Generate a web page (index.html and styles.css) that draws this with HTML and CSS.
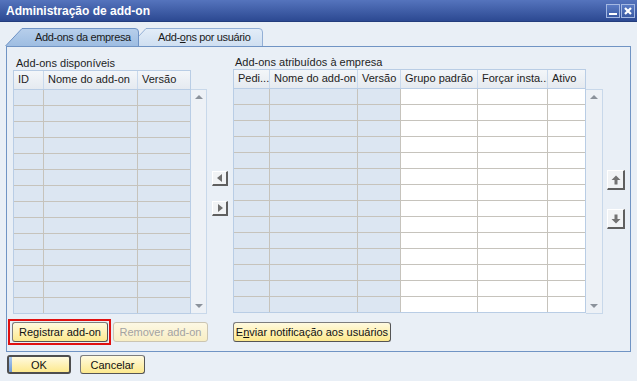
FILE: index.html
```html
<!doctype html>
<html lang="pt">
<head>
    <meta charset="UTF-8">
    <title>Administração de add-on</title>
    <link rel="stylesheet" href="styles.css">
</head>
<body>
    <div class="titlebar">
        <span class="title">Administração de add-on</span>
        <div class="controls">
            <span class="ctl"><svg width="10" height="10" viewBox="0 0 10 10"><rect x="1" y="7" width="8" height="2" fill="#fff"/></svg></span>
            <span class="ctl"><svg width="10" height="10" viewBox="0 0 10 10"><path d="M2 2 L8 8 M8 2 L2 8" stroke="#fff" stroke-width="2.2"/></svg></span>
        </div>
    </div>
    <div class="main">
        <div class="tabs">
            <div class="tab active">
                <svg width="134" height="18" viewBox="0 0 134 18"><defs><linearGradient id="ta" x1="0" y1="0" x2="0" y2="1"><stop offset="0" stop-color="#b7cfeb"/><stop offset="1" stop-color="#9ebde2"/></linearGradient></defs><path d="M0.5 18 L17 0.5 H130 Q133.5 0.5 133.5 4 V18" fill="url(#ta)" stroke="#6f93c5"/></svg>
                <span>Add-ons da empresa</span>
            </div>
            <div class="tab">
                <svg width="134" height="18" viewBox="0 0 134 18"><defs><linearGradient id="tb" x1="0" y1="0" x2="0" y2="1"><stop offset="0" stop-color="#e3edf8"/><stop offset="1" stop-color="#cfdff1"/></linearGradient></defs><path d="M0.5 18 L17 0.5 H130 Q133.5 0.5 133.5 4 V18" fill="url(#tb)" stroke="#93afd5"/></svg>
                <span>Add-<u>o</u>ns por usuário</span>
            </div>
        </div>
        <div class="panel">
            <div class="lists">
                <div class="side side-left">
                    <div class="label">Add-ons disponíveis</div>
                    <div class="gridbox">
                        <div class="grid grid-left" id="gridLeft">
                            <div class="head">
                                <div class="hc">ID</div>
                                <div class="hc">Nome do add-on</div>
                                <div class="hc">Versão</div>
                            </div>
                        </div>
                        <div class="scroll">
                            <span class="sa up"></span>
                            <span class="sa down"></span>
                        </div>
                    </div>
                </div>
                <div class="movers">
                    <span class="mv"><svg width="8" height="10" viewBox="0 0 8 10"><path d="M6 1 V9 L1 5 Z" fill="#6e6e6e"/></svg></span>
                    <span class="mv"><svg width="8" height="10" viewBox="0 0 8 10"><path d="M2 1 V9 L7 5 Z" fill="#6e6e6e"/></svg></span>
                </div>
                <div class="side side-right">
                    <div class="label">Add-ons atribuídos à empresa</div>
                    <div class="gridbox">
                        <div class="grid grid-right" id="gridRight">
                            <div class="head">
                                <div class="hc">Pedi...</div>
                                <div class="hc">Nome do add-on</div>
                                <div class="hc">Versão</div>
                                <div class="hc">Grupo padrão</div>
                                <div class="hc">Forçar insta...</div>
                                <div class="hc">Ativo</div>
                            </div>
                        </div>
                        <div class="scroll">
                            <span class="sa up"></span>
                            <span class="sa down"></span>
                        </div>
                    </div>
                </div>
                <div class="updown">
                    <span class="ud"><svg width="10" height="10" viewBox="0 0 10 10"><path d="M5 0.5 L9.5 5 H6.5 V9.5 H3.5 V5 H0.5 Z" fill="#737373"/></svg></span>
                    <span class="ud"><svg width="10" height="10" viewBox="0 0 10 10"><path d="M5 9.5 L9.5 5 H6.5 V0.5 H3.5 V5 H0.5 Z" fill="#737373"/></svg></span>
                </div>
            </div>
            <div class="actions">
                <div class="focus-box"><button class="btn btn-reg">Registrar add-on</button></div>
                <button class="btn btn-rem" disabled>Remover add-on</button>
                <button class="btn btn-send">E<u>n</u>viar notificação aos usuários</button>
            </div>
        </div>
        <div class="footer">
            <button class="btn btn-ok">OK</button>
            <button class="btn btn-cancel">Cancelar</button>
        </div>
    </div>
    <script type="text/javascript">
        // 14 linhas vazias em cada grade
        function fillGrid(id, cols){
            var grid = document.getElementById(id);
            for(var i = 0;i < 14;i++){
                var row = document.createElement('div');
                row.className = 'row';
                for(var j = 0;j < cols;j++){
                    var cell = document.createElement('div');
                    cell.className = 'c';
                    row.appendChild(cell);
                }
                grid.appendChild(row);
            }
        }
        fillGrid('gridLeft', 3);
        fillGrid('gridRight', 6);
    </script>
</body>
</html>
```

FILE: styles.css
```css
*{
    margin: 0;
    padding: 0;
    box-sizing: border-box;
}
body{
    width: 637px;
    height: 381px;
    overflow: hidden;
    background: #e9eff6;
    font-family: "Liberation Sans", Arial, sans-serif;
    font-size: 11px;
    color: #1e1e1e;
}
.titlebar{
    height: 22px;
    display: flex;
    align-items: center;
    justify-content: space-between;
    padding: 0 2px 0 6px;
    background: linear-gradient(#5574bd, #2c4992);
    border-bottom: 1px solid #233d7d;
}
.title{
    color: #fff;
    font-weight: bold;
    font-size: 12px;
}
.controls{
    display: flex;
    gap: 1px;
}
.ctl{
    width: 14px;
    height: 14px;
    border: 1px solid #a4b8e2;
    background: linear-gradient(#5a7bc4, #3b5ba4);
    display: flex;
    align-items: center;
    justify-content: center;
}
.main{
    padding: 6px 6px 0 6px;
}
.tabs{
    display: flex;
    height: 18px;
    margin-left: -1px;
}
.tab{
    position: relative;
    z-index: 1;
    width: 134px;
    height: 18px;
    line-height: 19px;
    padding-left: 29px;
    color: #1a1a1a;
    letter-spacing: -0.35px;
}
.tab svg{
    position: absolute;
    left: 0;
    top: 0;
    z-index: -1;
}
.tab span{
    position: relative;
}
.tab.active{
    z-index: 2;
    padding-left: 30px;
}
.tab + .tab{
    margin-left: -10px;
}
.panel{
    height: 306px;
    border: 1px solid #7094c4;
    padding: 8px 5px 0 6px;
    display: flex;
    flex-direction: column;
}
.lists{
    display: flex;
    align-items: flex-start;
}
.side-left{
    width: 194px;
    padding-top: 1px;
}
.side-right{
    width: 370px;
    margin-left: 5px;
}
.label{
    height: 14px;
    line-height: 14px;
    padding-left: 2px;
}
.side-left .label{
    padding-left: 3px;
}
.gridbox{
    display: flex;
    align-items: flex-start;
}
.grid{
    border: 1px solid #b9cde5;
    border-bottom: none;
}
.head, .row{
    display: grid;
}
.grid-left .head, .grid-left .row{
    grid-template-columns: 30px 94px 52px;
}
.grid-right .head, .grid-right .row{
    grid-template-columns: 36px 88px 43px 77px 70px 37px;
}
.head{
    height: 19px;
    border-bottom: 1px solid #b9cde5;
    background: linear-gradient(#f3f6f9, #e5eaf0);
}
.hc{
    border-right: 1px solid #c9d9ec;
    padding-left: 4px;
    line-height: 17px;
    white-space: nowrap;
    overflow: hidden;
    color: #222;
}
.hc:last-child, .c:last-child{
    border-right: none;
}
.row{
    height: 16px;
    border-bottom: 1px solid #c6c3bc;
}
.row:last-child{
    border-bottom-color: #b9cde5;
}
.c{
    border-right: 1px solid #c6c3bc;
    background: #dce6f2;
}
.grid-right .c:nth-child(n+4){
    background: #fff;
}
.scroll{
    width: 16px;
    height: 225px;
    margin-top: 19px;
    background: #edf1f6;
    border: 1px solid #c8d8ea;
    border-left: none;
    display: flex;
    flex-direction: column;
    justify-content: space-between;
    align-items: center;
    padding: 5px 0;
}
.side-right .scroll{
    width: 17px;
    margin-top: 20px;
}
.sa{
    width: 0;
    height: 0;
    border-left: 4px solid transparent;
    border-right: 4px solid transparent;
}
.sa.up{
    border-bottom: 4px solid #8b929b;
}
.sa.down{
    border-top: 4px solid #8b929b;
}
.movers{
    width: 16px;
    margin-left: 5px;
    margin-top: 116px;
    display: flex;
    flex-direction: column;
    gap: 15px;
}
.mv, .ud{
    display: flex;
    align-items: center;
    justify-content: center;
    background: #f1f3f5;
    border: 1px solid #fff;
    border-right: 2px solid #5f5f5f;
    border-bottom: 2px solid #5f5f5f;
}
.mv{
    width: 16px;
    height: 15px;
}
.updown{
    width: 18px;
    margin-left: 4px;
    margin-top: 115px;
    display: flex;
    flex-direction: column;
    gap: 19px;
}
.ud{
    width: 18px;
    height: 20px;
}
.actions{
    display: flex;
    align-items: center;
    margin-top: 5px;
    margin-left: -5px;
}
.focus-box{
    border: 2px solid #e01010;
    padding: 1px 1px 1px 2px;
}
.btn{
    height: 20px;
    font-family: "Liberation Sans", Arial, sans-serif;
    font-size: 11px;
    color: #111;
    background: linear-gradient(#fffae0, #fde98d);
    border: 1px solid #7d7d7d;
    border-right-color: #555;
    border-bottom-color: #555;
    border-radius: 3px;
}
.btn-reg{
    width: 96px;
    display: block;
}
.btn-rem{
    width: 95px;
    margin-left: 2px;
    color: #a3a3a3;
    background: linear-gradient(#fdf8e4, #f8eec4);
    border-color: #cbc5b2;
}
.btn-send{
    width: 158px;
    margin-left: 25px;
}
.footer{
    display: flex;
    margin-top: 3px;
    margin-left: 1px;
    gap: 9px;
}
.btn-ok{
    position: relative;
    width: 64px;
    height: 19px;
    border: 2px solid #4e4e4e;
    overflow: hidden;
}
.btn-ok::before{
    content: "";
    position: absolute;
    left: 0;
    top: 0;
    bottom: 0;
    width: 3px;
    background: linear-gradient(#a9c8ef, #6f9bd6);
}
.btn-cancel{
    width: 65px;
    height: 19px;
}
```
